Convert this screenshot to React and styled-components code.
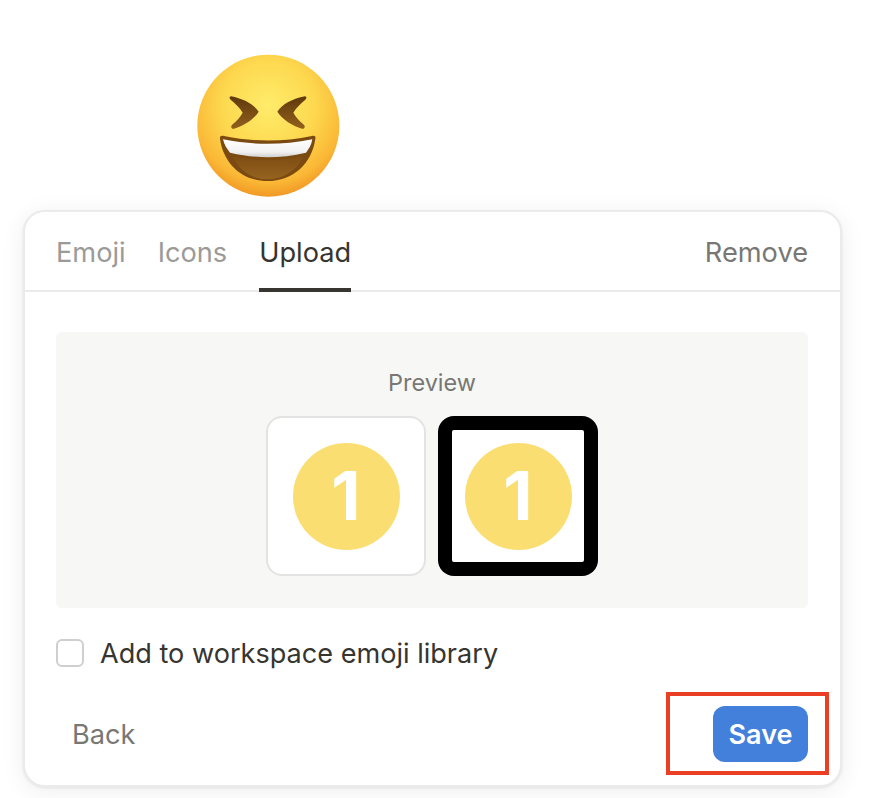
import styled, { createGlobalStyle } from "styled-components";

const GlobalStyle = createGlobalStyle`
  html, body {
    margin: 0;
    padding: 0;
    background: #fff;
    font-family: Inter, "Liberation Sans", sans-serif;
    color: #37352f;
  }
`;

const Page = styled.div`
  position: relative;
  width: 870px;
  height: 798px;
  overflow: hidden;
  padding-top: 40px;
  box-sizing: border-box;
`;

const EmojiWrap = styled.div`
  width: 180px;
  height: 170px;
  margin-left: 180px;
  svg {
    display: block;
  }
`;

const Card = styled.div`
  width: 819px;
  height: 577px;
  margin-left: 23px;
  box-sizing: border-box;
  border: 2px solid #ebebea;
  border-radius: 22px;
  background: #fff;
  box-shadow: 0 4px 24px rgba(15, 15, 15, 0.07), 0 1px 3px rgba(15, 15, 15, 0.08);
  display: flex;
  flex-direction: column;
`;

const Tabs = styled.div`
  height: 80px;
  box-sizing: border-box;
  padding: 0 32px 0 31px;
  border-bottom: 2px solid #ebebea;
  display: flex;
  gap: 32px;
`;

const Tab = styled.div`
  position: relative;
  height: 80px;
  box-sizing: border-box;
  padding-top: 22px;
  font-size: 27.2px;
  line-height: 38px;
  color: ${(p) => (p.$active ? "#37352f" : "#9b9a97")};
  ${(p) =>
    p.$active &&
    `&:after {
      content: "";
      position: absolute;
      left: 0;
      right: 0;
      bottom: 0;
      height: 4px;
      background: #37352f;
    }`}
`;

const RemoveTab = styled(Tab)`
  margin-left: auto;
  color: #787774;
`;

const Body = styled.div`
  padding: 40px 32px 0 31px;
  display: flex;
  flex-direction: column;
`;

const PreviewPanel = styled.div`
  height: 276px;
  box-sizing: border-box;
  padding-top: 36px;
  background: #f7f7f5;
  border-radius: 6px;
  display: flex;
  flex-direction: column;
  align-items: center;
`;

const PreviewLabel = styled.div`
  font-size: 23.5px;
  line-height: 30px;
  color: #787774;
  margin-bottom: 18px;
`;

const TileRow = styled.div`
  display: flex;
  gap: 12px;
`;

const Tile = styled.div`
  width: 160px;
  height: 160px;
  box-sizing: border-box;
  background: #fff;
  border: 2px solid #e3e3e1;
  border-radius: 16px;
  display: flex;
  align-items: center;
  justify-content: center;
`;

const OutlinedTile = styled(Tile)`
  border: none;
  background: #000;
`;

const OutlinedInner = styled.div`
  width: 132px;
  height: 132px;
  background: #fff;
  border-radius: 2px;
  display: flex;
  align-items: center;
  justify-content: center;
`;

const Badge = styled.div`
  width: 107px;
  height: 107px;
  border-radius: 50%;
  background: #fbde71;
  color: #fff;
  font-size: 68px;
  font-weight: 700;
  line-height: 105px;
  text-align: center;
`;

const CheckRow = styled.label`
  display: flex;
  align-items: center;
  gap: 16px;
  margin-top: 31px;
  height: 28px;
  font-size: 27.1px;
  color: #37352f;
`;

const Box = styled.span`
  width: 28px;
  height: 28px;
  box-sizing: border-box;
  border: 2px solid #cfcfcd;
  border-radius: 6px;
  background: #fff;
`;

const Footer = styled.div`
  display: flex;
  justify-content: space-between;
  align-items: center;
  margin-top: 39px;
`;

const BackButton = styled.div`
  padding-left: 16px;
  font-size: 27.2px;
  color: #787774;
`;

const SaveButton = styled.div`
  width: 95px;
  height: 56px;
  border-radius: 12px;
  background: #4380dc;
  color: #fff;
  font-size: 27px;
  font-weight: 600;
  line-height: 58px;
  text-align: center;
`;

const Highlight = styled.div`
  position: absolute;
  left: 666px;
  top: 692px;
  width: 163px;
  height: 83px;
  box-sizing: border-box;
  border: 4px solid #ea3f25;
  pointer-events: none;
`;

function LaughEmoji() {
  return (
    <svg width="180" height="170" viewBox="0 0 540 510">
      <defs>
        <radialGradient id="face" cx="50%" cy="36%" r="66%">
          <stop offset="0%" stopColor="#ffec6a" />
          <stop offset="50%" stopColor="#fdd84f" />
          <stop offset="82%" stopColor="#fab735" />
          <stop offset="100%" stopColor="#ef9322" />
        </radialGradient>
        <linearGradient id="eye" x1="0" y1="0" x2="0" y2="1">
          <stop offset="0%" stopColor="#5f390c" />
          <stop offset="100%" stopColor="#93601c" />
        </linearGradient>
        <linearGradient id="mouth" x1="0" y1="0" x2="0" y2="1">
          <stop offset="0%" stopColor="#7d4d12" />
          <stop offset="100%" stopColor="#96631f" />
        </linearGradient>
        <linearGradient id="teeth" x1="0" y1="0" x2="0" y2="1">
          <stop offset="0%" stopColor="#ffffff" />
          <stop offset="70%" stopColor="#f2f2f2" />
          <stop offset="100%" stopColor="#cfcfcf" />
        </linearGradient>
      </defs>
      <circle cx="265" cy="257" r="213" fill="url(#face)" />
      <path
        d="M153 169 C190 176 222 193 236 215 C222 238 190 258 159 267 C152 264 152 258 158 253 C170 243 182 230 188 218 C180 204 166 190 152 179 C147 175 148 170 153 169 Z"
        fill="url(#eye)"
      />
      <path
        d="M375 169 C338 176 306 193 292 215 C306 238 338 258 369 267 C376 264 376 258 370 253 C358 243 346 230 340 218 C348 204 362 190 376 179 C381 175 380 170 375 169 Z"
        fill="url(#eye)"
      />
      <path
        d="M120 296 C118 290 124 286 132 288 C220 306 310 306 396 288 C404 286 408 290 406 296 C396 370 340 423 262 423 C186 423 130 370 120 296 Z"
        fill="#7a4a10"
      />
      <path
        d="M129 298 C220 316 306 316 397 298 C395 314 386 328 378 338 C300 356 226 356 150 338 C142 328 132 314 129 298 Z"
        fill="url(#teeth)"
      />
      <path
        d="M156 348 C226 364 300 364 372 348 C346 396 306 418 262 418 C220 418 180 396 156 348 Z"
        fill="url(#mouth)"
      />
    </svg>
  );
}

export default function App() {
  return (
    <>
      <GlobalStyle />
      <Page>
        <EmojiWrap>
          <LaughEmoji />
        </EmojiWrap>
        <Card>
          <Tabs>
            <Tab>Emoji</Tab>
            <Tab>Icons</Tab>
            <Tab $active>Upload</Tab>
            <RemoveTab>Remove</RemoveTab>
          </Tabs>
          <Body>
            <PreviewPanel>
              <PreviewLabel>Preview</PreviewLabel>
              <TileRow>
                <Tile>
                  <Badge>1</Badge>
                </Tile>
                <OutlinedTile>
                  <OutlinedInner>
                    <Badge>1</Badge>
                  </OutlinedInner>
                </OutlinedTile>
              </TileRow>
            </PreviewPanel>
            <CheckRow>
              <Box />
              Add to workspace emoji library
            </CheckRow>
            <Footer>
              <BackButton>Back</BackButton>
              <SaveButton>Save</SaveButton>
            </Footer>
          </Body>
        </Card>
        <Highlight />
      </Page>
    </>
  );
}
